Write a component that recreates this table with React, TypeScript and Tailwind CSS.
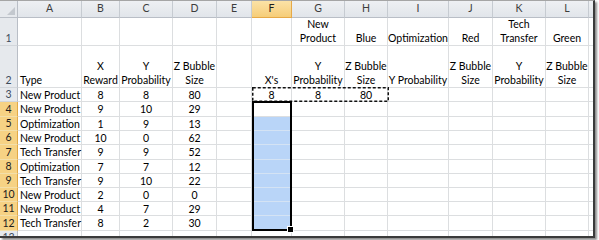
import React from "react";

type Col = { key: string; w: string };

const COLS: Col[] = [
  { key: "A", w: "w-[64px]" },
  { key: "B", w: "w-[38px]" },
  { key: "C", w: "w-[53px]" },
  { key: "D", w: "w-[44px]" },
  { key: "E", w: "w-[35px]" },
  { key: "F", w: "w-[40px]" },
  { key: "G", w: "w-[53px]" },
  { key: "H", w: "w-[43px]" },
  { key: "I", w: "w-[61px]" },
  { key: "J", w: "w-[44px]" },
  { key: "K", w: "w-[53px]" },
  { key: "L", w: "w-[43px]" },
  { key: "M", w: "w-[6px]" },
];

type Cells = Partial<Record<string, string[]>>;

const titleRow: Cells = {
  G: ["New", "Product"],
  H: ["Blue"],
  I: ["Optimization"],
  J: ["Red"],
  K: ["Tech", "Transfer"],
  L: ["Green"],
};

const labelRow: Cells = {
  A: ["Type"],
  B: ["X", "Reward"],
  C: ["Y", "Probability"],
  D: ["Z Bubble", "Size"],
  F: ["X's"],
  G: ["Y", "Probability"],
  H: ["Z Bubble", "Size"],
  I: ["Y Probability"],
  J: ["Z Bubble", "Size"],
  K: ["Y", "Probability"],
  L: ["Z Bubble", "Size"],
};

const projects: [string, number, number, number][] = [
  ["New Product", 8, 8, 80],
  ["New Product", 9, 10, 29],
  ["Optimization", 1, 9, 13],
  ["New Product", 10, 0, 62],
  ["Tech Transfer", 9, 9, 52],
  ["Optimization", 7, 7, 12],
  ["Tech Transfer", 9, 10, 22],
  ["New Product", 2, 0, 0],
  ["New Product", 4, 7, 29],
  ["Tech Transfer", 8, 2, 30],
];

const dataHeights = [
  "h-[14px]",
  "h-[15px]",
  "h-[14px]",
  "h-[14px]",
  "h-[15px]",
  "h-[14px]",
  "h-[14px]",
  "h-[14px]",
  "h-[14px]",
  "h-[15px]",
];

function RowHeader({ n, h, active }: { n: string; h: string; active?: boolean }) {
  return (
    <div
      className={`${h} w-[18px] shrink-0 flex items-end justify-center leading-[14px] border-b border-r ${
        active
          ? "bg-[#f6d284] border-b-[#f3dfa9] border-r-[#e2a944] text-[#1c1c1c]"
          : "bg-[#e6e9ed] border-b-[#d2d6db] border-r-[#b9bec6] text-[#3d4b5c]"
      }`}
    >
      {n}
    </div>
  );
}

function MultiLine({ lines, left }: { lines: string[]; left?: boolean }) {
  return (
    <div className={`flex flex-col leading-[14px] whitespace-nowrap ${left ? "items-start pl-[2px]" : "items-center w-full"}`}>
      {lines.map((l) => (
        <span key={l}>{l}</span>
      ))}
    </div>
  );
}

function TextRow({ h, n, cells }: { h: string; n: string; cells: Cells }) {
  return (
    <div className="flex">
      <RowHeader n={n} h={h} />
      {COLS.map((c) => {
        const lines = cells[c.key];
        return (
          <div
            key={c.key}
            className={`${c.w} ${h} shrink-0 flex items-end overflow-visible border-r border-b border-[#dcdee0]`}
          >
            {lines ? <MultiLine lines={lines} left={c.key === "A"} /> : null}
          </div>
        );
      })}
    </div>
  );
}

function DataRow({ idx }: { idx: number }) {
  const [type, x, y, z] = projects[idx];
  const h = dataHeights[idx];
  const rowNo = idx + 3;
  const values: Record<string, string> = { A: type, B: String(x), C: String(y), D: String(z) };
  if (idx === 0) {
    values.F = "8";
    values.G = "8";
    values.H = "80";
  }
  return (
    <div className="flex">
      <RowHeader n={String(rowNo)} h={h} active={rowNo >= 4} />
      {COLS.map((c) => {
        const v = values[c.key];
        const tinted = c.key === "F" && rowNo >= 5;
        return (
          <div
            key={c.key}
            className={`${c.w} ${h} shrink-0 flex items-center leading-[14px] whitespace-nowrap border-r border-b ${
              tinted ? "bg-[#b9d5f8] border-[#d4e3f4]" : "border-[#dcdee0]"
            } ${c.key === "A" ? "justify-start pl-[2px]" : "justify-center"}`}
          >
            {v}
          </div>
        );
      })}
    </div>
  );
}

export default function App() {
  return (
    <div className="w-[599px] h-[240px] bg-white overflow-hidden font-['Lato','Liberation_Sans',sans-serif] text-[10.5px] text-black">
      <div className="w-[595px] h-[238px] border-t border-t-[#a5a5a5] border-r-2 border-b-2 border-r-[#3b3b3b] border-b-[#3b3b3b] shadow-[2px_2px_2px_rgba(0,0,0,0.45)] overflow-hidden">
        <div className="relative">
          {/* column headers */}
          <div className="flex">
            <div className="w-[18px] h-[17px] shrink-0 bg-[#e6e9ed] border-r border-b border-[#b9bec6] relative">
              <svg className="absolute right-[2px] bottom-[2px]" width="8" height="8" viewBox="0 0 8 8">
                <polygon points="8,0 8,8 0,8" fill="#c3c8ce" />
              </svg>
            </div>
            {COLS.map((c) => (
              <div
                key={c.key}
                className={`${c.w} h-[17px] shrink-0 flex items-center justify-center border-r border-b ${
                  c.key === "F"
                    ? "bg-gradient-to-b from-[#fbe2a6] to-[#f6cd78] border-r-[#e6a947] border-b-[#e6a947] text-[#1c1c1c]"
                    : "bg-gradient-to-b from-[#eef0f3] to-[#e1e5ea] border-r-[#c6cbd1] border-b-[#b9bec6] text-[#3d3d3d]"
                }`}
              >
                {c.key === "M" ? "" : c.key}
              </div>
            ))}
          </div>

          <TextRow h="h-[28px]" n="1" cells={titleRow} />
          <TextRow h="h-[42px]" n="2" cells={labelRow} />
          {projects.map((_, i) => (
            <DataRow key={i} idx={i} />
          ))}
          <div className="flex">
            <RowHeader n="13" h="h-[14px]" />
            {COLS.map((c) => (
              <div key={c.key} className={`${c.w} h-[14px] shrink-0 border-r border-[#dcdee0]`} />
            ))}
          </div>

          {/* copied range F3:H3 */}
          <svg className="absolute left-[252px] top-[86px]" width="137" height="15" viewBox="0 0 137 15">
            <rect x="0.75" y="0.75" width="135.5" height="13.5" fill="none" stroke="#111" strokeWidth="1.5" strokeDasharray="3 2" />
          </svg>

          {/* selected range F4:F12 */}
          <div className="absolute left-[252px] top-[100px] w-[40px] h-[130px] border-2 border-black" />
          <div className="absolute left-[288px] top-[226px] w-[5px] h-[5px] bg-black outline outline-1 outline-white" />
        </div>
      </div>
    </div>
  );
}
